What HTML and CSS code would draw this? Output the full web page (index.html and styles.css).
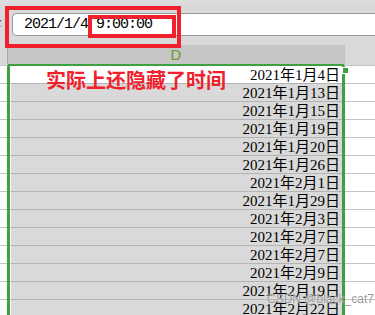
FILE: index.html
```html
<!DOCTYPE html>
<html>

<head>
    <title>隐藏的时间</title>
    <link rel="stylesheet" href="styles.css">
</head>

<body>
    <div class="formula-bar">
        <span class="fx">fx</span>
        <div class="formula-input"><span>2021/1/4</span> <span>9:00:00</span></div>
    </div>
    <div class="mark mark-outer"></div>
    <div class="mark mark-inner"></div>

    <div class="header-row">
        <div class="corner"></div>
        <div class="col-head">D</div>
        <div class="rest-head"></div>
    </div>

    <div class="sheet">
        <div class="side-col" id="left-col"></div>
        <div class="col-d" id="col-d"></div>
        <div class="side-col side-right" id="right-col"></div>
        <div class="fill-handle"></div>
        <div class="note">实际上还隐藏了时间</div>
    </div>

    <div class="watermark">CSDN @black_cat7</div>

    <script>
        const dates = ["2021年1月4日", "2021年1月13日", "2021年1月15日", "2021年1月19日", "2021年1月20日",
            "2021年1月26日", "2021年2月1日", "2021年1月29日", "2021年2月3日", "2021年2月7日",
            "2021年2月7日", "2021年2月9日", "2021年2月19日", "2021年2月22日"];
        const colD = document.getElementById("col-d");
        const leftCol = document.getElementById("left-col");
        const rightCol = document.getElementById("right-col");
        dates.forEach((d, i) => {
            const cell = document.createElement("div");
            cell.className = i === 0 ? "cell active" : "cell";
            cell.innerText = d;
            colD.appendChild(cell);
            leftCol.appendChild(document.createElement("div")).className = "line-cell";
            rightCol.appendChild(document.createElement("div")).className = "line-cell";
        });
    </script>
</body>

</html>
```

FILE: styles.css
```css
body {
    margin: 0;
    padding: 0;
    width: 375px;
    height: 315px;
    overflow: hidden;
    background: #ffffff;
    position: relative;
    font-family: "Liberation Serif", "Noto Sans CJK SC", serif;
}

.formula-bar {
    height: 45px;
    box-sizing: border-box;
    padding-top: 13px;
    background: #d9d9d9;
    border-top: 3px solid #dedede;
    display: flex;
    align-items: flex-start;
}

.fx {
    width: 12px;
    text-indent: -9px;
    overflow: hidden;
    font-family: "Liberation Serif", serif;
    font-style: italic;
    font-size: 14px;
    line-height: 20px;
    margin-top: -3px;
    color: #333;
}

.formula-input {
    flex: 1;
    height: 23px;
    box-sizing: border-box;
    margin-top: -3px;
    background: #fff;
    border: 1px solid #9a9a9a;
    border-right: none;
    border-radius: 5px 0 0 5px;
    padding-left: 11px;
    font-family: "Liberation Mono", monospace;
    font-size: 15px;
    letter-spacing: -1px;
    line-height: 21px;
    color: #000;
}

.mark {
    position: absolute;
    border: 4px solid #f0212d;
    box-sizing: border-box;
}

.mark-outer {
    left: 5px;
    top: 6px;
    width: 176px;
    height: 42px;
}

.mark-inner {
    left: 88px;
    top: 15px;
    width: 88px;
    height: 23px;
}

.header-row {
    display: flex;
    height: 21px;
}

.corner {
    width: 8px;
    background: #d9d9d9;
    border-right: 1px solid #a8a8a8;
    border-bottom: 1px solid #c4c4c4;
    box-sizing: border-box;
}

.col-head {
    width: 336px;
    background: #c6c6c6;
    border-bottom: 2px solid #3fa03f;
    box-sizing: border-box;
    text-align: center;
    font-family: "Liberation Sans", sans-serif;
    font-size: 15px;
    line-height: 19px;
    color: #6e9a2c;
}

.rest-head {
    flex: 1;
    background: #d9d9d9;
    border-left: 1px solid #c0c0c0;
    border-bottom: 1px solid #c4c4c4;
}

.sheet {
    display: flex;
    position: relative;
}

.side-col {
    width: 7px;
}

.side-right {
    flex: 1;
}

.line-cell {
    height: 17px;
    border-bottom: 1px solid #c4c4c4;
}

.col-d {
    width: 338px;
    box-sizing: border-box;
    border-left: 3px solid #3fa03f;
    border-right: 3px solid #3fa03f;
}

.cell {
    height: 17px;
    border-bottom: 1px solid #b4b4b4;
    border-left: 1px solid #ffffff;
    background: #d9d9d9;
    text-align: right;
    padding-right: 2px;
    font-size: 15px;
    line-height: 18px;
    color: #000;
}

.cell.active {
    background: #ffffff;
}

.fill-handle {
    position: absolute;
    left: 342px;
    top: 1px;
    width: 5px;
    height: 5px;
    background: #3fa03f;
    border: 1px solid #ffffff;
}

.note {
    position: absolute;
    left: 46px;
    top: 2px;
    font-family: "Noto Sans CJK SC", sans-serif;
    font-size: 20px;
    font-weight: bold;
    line-height: 24px;
    color: #f0212d;
}

.watermark {
    position: absolute;
    left: 267px;
    top: 292px;
    font-family: "Liberation Sans", sans-serif;
    font-size: 12px;
    color: rgba(120, 120, 120, 0.75);
    text-shadow: 0 0 1px rgba(255, 255, 255, 0.9);
}
```
